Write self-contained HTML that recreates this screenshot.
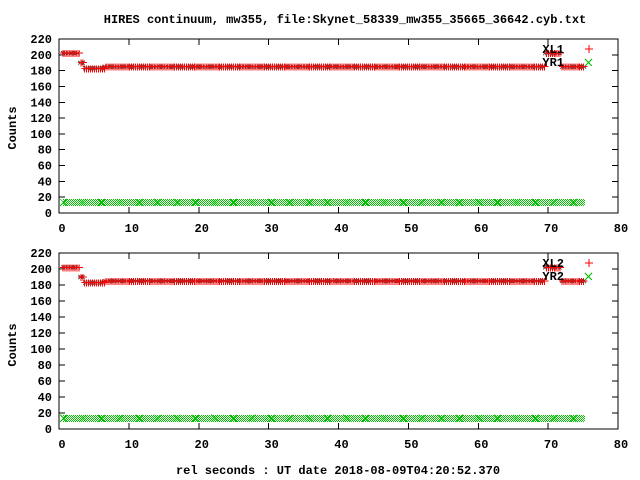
<!DOCTYPE html>
<html><head><meta charset="utf-8"><style>
html,body{margin:0;padding:0;background:#fff;width:640px;height:480px;overflow:hidden}
svg{display:block}
text{font-family:"Liberation Mono",monospace;font-weight:bold;font-size:12px;fill:#000}
</style></head><body>
<svg id="s" width="640" height="480" viewBox="0 0 640 480" shape-rendering="crispEdges">
<defs>
<pattern id="chk" width="2" height="2" patternUnits="userSpaceOnUse">
<rect x="0" y="0" width="1" height="1" fill="#00c000"/><rect x="1" y="1" width="1" height="1" fill="#00c000"/>
</pattern>
</defs>
<text x="345" y="23" text-anchor="middle">HIRES continuum, mw355, file:Skynet_58339_mw355_35665_36642.cyb.txt</text>
<text x="16" y="128" text-anchor="middle" transform="rotate(-90 16 128)">Counts</text>
<text x="16" y="345" text-anchor="middle" transform="rotate(-90 16 345)">Counts</text>
<text x="338" y="474" text-anchor="middle">rel seconds : UT date 2018-08-09T04:20:52.370</text>
<g id="g"></g>
</svg>
<script>
var g=document.getElementById('g'),h='';
var X0=59,X1=618;
function px(v){return X0+v*(X1-X0)/80}
function val(v){if(v<3)return 202;if(v<3.5)return 190;if(v<6.5)return 183;if(v>69.5&&v<72)return 202;return 185;}
function plot(top,bot,n){
 var py=function(v){return bot-v*(bot-top)/220};
 for(var v=0;v<=220;v+=20){var y=py(v);
  h+='<text x="52" y="'+(y+4)+'" text-anchor="end">'+v+'</text>';
  h+='<line x1="'+X0+'" y1="'+y+'" x2="'+(X0+6)+'" y2="'+y+'" stroke="#000"/><line x1="'+X1+'" y1="'+y+'" x2="'+(X1-6)+'" y2="'+y+'" stroke="#000"/>';}
 for(var v=0;v<=80;v+=10){var x=px(v);
  h+='<text x="'+(x+3)+'" y="'+(bot+19)+'" text-anchor="middle">'+v+'</text>';
  h+='<line x1="'+x+'" y1="'+bot+'" x2="'+x+'" y2="'+(bot-6)+'" stroke="#000"/><line x1="'+x+'" y1="'+top+'" x2="'+x+'" y2="'+(top+6)+'" stroke="#000"/>';}
 h+='<rect x="'+X0+'" y="'+top+'" width="'+(X1-X0)+'" height="'+(bot-top)+'" fill="none" stroke="#000"/>';
 var gy=py(14);
 h+='<rect x="'+px(0.6)+'" y="'+(gy-3)+'" width="'+(px(75.3)-px(0.6))+'" height="7" fill="url(#chk)"/>';
 for(var v=0.6;v<75.3;v+=2.7){var x=px(v);h+='<path d="M'+(x-3)+' '+(gy-3)+'l7 7M'+(x-3)+' '+(gy+4)+'l7 -7" stroke="#00c000" fill="none"/>';}
 for(var v=0.6;v<75.3;v+=0.35){var x=px(v),by=py(val(v));h+='<path d="M'+(x-2)+' '+(by-2)+'l4 4M'+(x-2)+' '+(by+2)+'l4 -4" stroke="#555" fill="none"/>';}
 for(var v=0.6;v<75.3;v+=0.28){
  var x=px(v),y=py(val(v));h+='<path d="M'+(x-3)+' '+y+'h7M'+x+' '+(y-3)+'v7" stroke="#f00" fill="none"/>';}
 h+='<text x="564" y="'+(top+14)+'" text-anchor="end">XL'+n+'</text>';
 h+='<path d="M585 '+(top+10)+'h8M589 '+(top+6)+'v8" stroke="#f00" fill="none"/>';
 h+='<text x="564" y="'+(top+27)+'" text-anchor="end">YR'+n+'</text>';
 h+='<path d="M585 '+(top+20)+'l7 7M585 '+(top+27)+'l7 -7" stroke="#00c000" fill="none"/>';
}
plot(39,213,1);plot(253,429,2);
g.innerHTML=h;
</script>
</body></html>
